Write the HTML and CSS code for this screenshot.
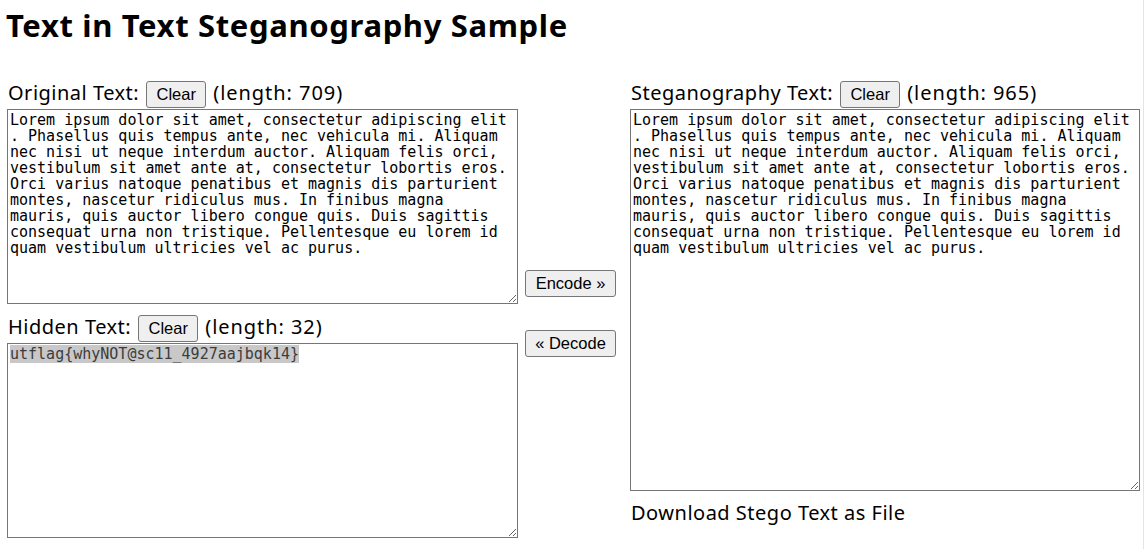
FILE: index.html
```html
<!DOCTYPE html>
<html lang="en">
<head>
<meta charset="utf-8">
<title>Text in Text Steganography Sample</title>
<link rel="stylesheet" href="styles.css">
</head>
<body>
<h1 class="title">Text in Text Steganography Sample</h1>
<div class="layout">
  <div class="col col-left">
    <div class="field-head">
      <span class="label">Original Text:</span>
      <button class="btn btn-clear" type="button">Clear</button>
      <span class="len">(length: 709)</span>
    </div>
    <textarea class="box box-orig" spellcheck="false">Lorem ipsum dolor sit amet, consectetur adipiscing elit
. Phasellus quis tempus ante, nec vehicula mi. Aliquam
nec nisi ut neque interdum auctor. Aliquam felis orci,
vestibulum sit amet ante at, consectetur lobortis eros.
Orci varius natoque penatibus et magnis dis parturient
montes, nascetur ridiculus mus. In finibus magna
mauris, quis auctor libero congue quis. Duis sagittis
consequat urna non tristique. Pellentesque eu lorem id
quam vestibulum ultricies vel ac purus.</textarea>
    <div class="field-head head-hidden">
      <span class="label">Hidden Text:</span>
      <button class="btn btn-clear" type="button">Clear</button>
      <span class="len">(length: 32)</span>
    </div>
    <div class="box box-hidden"><span class="sel">utflag{whyNOT@sc11_4927aajbqk14}</span></div>
  </div>
  <div class="col col-mid">
    <button class="btn btn-act" type="button">Encode »</button>
    <button class="btn btn-act btn-decode" type="button">« Decode</button>
  </div>
  <div class="col col-right">
    <div class="field-head">
      <span class="label">Steganography Text:</span>
      <button class="btn btn-clear" type="button">Clear</button>
      <span class="len">(length: 965)</span>
    </div>
    <textarea class="box box-stego" spellcheck="false">Lorem ipsum dolor sit amet, consectetur adipiscing elit
. Phasellus quis tempus ante, nec vehicula mi. Aliquam
nec nisi ut neque interdum auctor. Aliquam felis orci,
vestibulum sit amet ante at, consectetur lobortis eros.
Orci varius natoque penatibus et magnis dis parturient
montes, nascetur ridiculus mus. In finibus magna
mauris, quis auctor libero congue quis. Duis sagittis
consequat urna non tristique. Pellentesque eu lorem id
quam vestibulum ultricies vel ac purus.</textarea>
    <div class="download">Download Stego Text as File</div>
  </div>
</div>
</body>
</html>
```

FILE: styles.css
```css
html, body {
  margin: 0;
  padding: 0;
  background: #ffffff;
}

body {
  width: 1144px;
  min-height: 549px;
  box-sizing: border-box;
  border-right: 1px solid #e4e4e4;
  padding: 0 0 0 7px;
  color: #000000;
  font-family: "Noto Sans", "Noto Sans CJK JP", sans-serif;
}

.title {
  margin: 7px 0 0 -1px;
  font-size: 31px;
  line-height: 36px;
  font-weight: 700;
  letter-spacing: 0.65px;
}

.layout {
  display: flex;
  align-items: flex-start;
  margin-top: 38px;
}

.col {
  display: flex;
  flex-direction: column;
}

.col-left {
  width: 511px;
}

.col-mid {
  width: 91px;
  margin-left: 7px;
  padding-top: 189px;
}

.col-right {
  width: 510px;
  margin-left: 14px;
}

.field-head {
  display: flex;
  align-items: flex-start;
  height: 28px;
  padding-left: 1px;
}

.head-hidden {
  margin-top: 11px;
}

.label,
.len,
.download {
  font-size: 20px;
  line-height: 24px;
  white-space: nowrap;
  letter-spacing: 0.5px;
}

.len {
  letter-spacing: 0.95px;
}

.label {
  margin-right: 7px;
}

.len {
  margin-left: 7px;
}

.btn {
  font-family: "Liberation Sans", Arial, sans-serif;
  font-size: 16.5px;
  color: #000000;
  background: #efefef;
  border: 1px solid #767676;
  border-radius: 3px;
  height: 27px;
  padding: 0;
  margin: 0;
  box-sizing: border-box;
  line-height: 1;
}

.btn-clear {
  width: 60px;
}

.btn-act {
  width: 91px;
}

.btn-decode {
  margin-top: 33px;
}

.box {
  box-sizing: border-box;
  display: block;
  margin: 0;
  border: 1px solid #767676;
  padding: 2px 2px;
  background: #ffffff;
  color: #000000;
  font-family: "DejaVu Sans Mono", "Liberation Mono", monospace;
  font-size: 15px;
  line-height: 16px;
  white-space: pre-wrap;
  resize: both;
  overflow: hidden;
  outline: none;
}

.box-orig {
  width: 511px;
  height: 195px;
}

.box-hidden {
  width: 511px;
  height: 195px;
}

.sel {
  background: #c8c8c8;
  color: #3c3c3c;
}

.box-stego {
  width: 510px;
  height: 382px;
}

.download {
  margin-top: 10px;
  padding-left: 1px;
}
```
